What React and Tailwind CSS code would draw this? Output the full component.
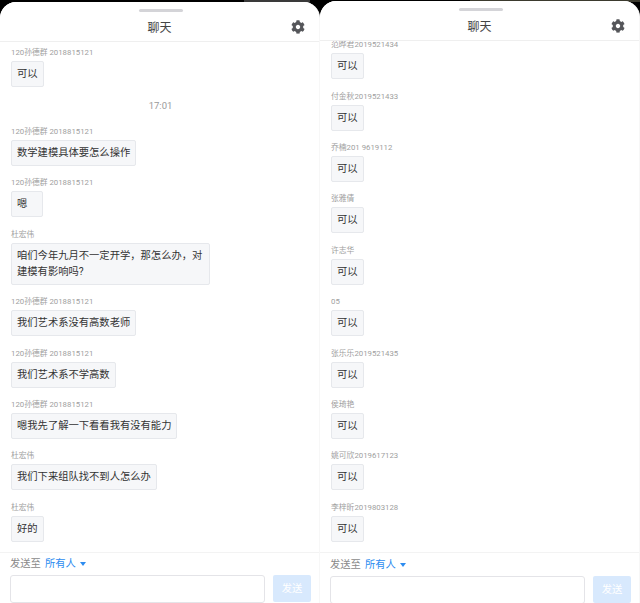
import React from "react";
import { FaCog } from "react-icons/fa";

const A = "120孙德群 2018815121";
const leftItems = [
  { n: A, t: "可以" },
  { time: "17:01" },
  { n: A, t: "数学建模具体要怎么操作" },
  { n: A, t: "嗯", w: "w-[32px]" },
  { n: "杜宏伟", t: "咱们今年九月不一定开学，那怎么办，对建模有影响吗?", w: "w-[199px]" },
  { n: A, t: "我们艺术系没有高数老师" },
  { n: A, t: "我们艺术系不学高数" },
  { n: A, t: "嗯我先了解一下看看我有没有能力" },
  { n: "杜宏伟", t: "我们下来组队找不到人怎么办" },
  { n: "杜宏伟", t: "好的" },
];
const rightItems = [
  "范晔君2019521434", "付金秋2019521433", "乔楠201 9619112", "张雅倩", "许志华", "05",
  "张乐乐2019521435", "侯琦艳", "姚可欣2019617123", "李梓昕2019803128",
].map((n) => ({ n, t: "可以" }));

function Message({ n, t, w }) {
  return (
    <div className="flex flex-col items-start">
      <div className="h-[14px] text-[7.8px] leading-[16px] text-[#a0a0a0] whitespace-nowrap">{n}</div>
      <div className={`mt-[2px] px-[5px] py-[4px] rounded-[2px] border border-[#e6e8ec] bg-[#f6f7f9] text-[10.3px] leading-[16px] text-[#333333] ${w || ""}`}>
        {t}
      </div>
    </div>
  );
}

function Panel({ items, topClass, listClass, footClass }) {
  return (
    <div className={`w-[320px] h-[603px] overflow-hidden flex flex-col bg-white rounded-t-[16px] border-r border-[#f7f7f7] ${topClass}`}>
      <div className="relative shrink-0 h-[40px] border-b border-[#efefef] flex items-center justify-center bg-white z-10">
        <div className="absolute left-[139px] top-[7px] w-[44px] h-[3px] rounded-full bg-[#d4d4d8]" />
        <span className="text-[12px] leading-[16px] text-[#444444] mt-[12px]">聊天</span>
        <FaCog className="absolute right-[14px] top-[18px] text-[#55565a]" size={14} />
      </div>
      <div className={`flex-1 min-h-0 overflow-hidden px-[11px] ${listClass}`}>
        <div className="flex flex-col gap-[9.4px]">
          {items.map((it, i) =>
            it.time ? (
              <div key={i} className="h-[18.2px] pt-[2px] flex items-center justify-center text-[9.5px] text-[#9a9a9a] mr-[-2px]">{it.time}</div>
            ) : (
              <Message key={i} {...it} />
            )
          )}
        </div>
      </div>
      <div className={`shrink-0 border-t border-[#f3f3f3] bg-white pl-[10px] pr-[8px] ${footClass}`}>
        <div className="h-[22px] flex items-center text-[10.3px] text-[#8a8a8a]">
          <span>发送至</span>
          <span className="ml-[4px] text-[#2d8cf0]">所有人</span>
          <span className="ml-[4px] w-0 h-0 border-x-[3.5px] border-x-transparent border-t-[4px] border-t-[#2d8cf0]" />
        </div>
        <div className="flex gap-[8px]">
          <div className="w-[255px] shrink-0 h-[28px] border border-[#e4e4e8] rounded-[3px] bg-white" />
          <div className="w-[38px] shrink-0 h-[27px] rounded-[2px] bg-[#d8e9fd] text-white text-[10.3px] flex items-center justify-center">发送</div>
        </div>
      </div>
    </div>
  );
}

export default function App() {
  return (
    <div className="relative w-[640px] h-[603px] overflow-hidden flex bg-black" style={{ fontFamily: '"Roboto","Noto Sans CJK SC",sans-serif' }}>
      <div className="absolute left-[244px] top-0 w-[66px] h-[3px] bg-[#3a3a3a]" />
      <div className="absolute left-[470px] top-0 w-[170px] h-[2px] bg-[#3b3a2e]" />
      <div className="relative flex">
        <Panel items={leftItems} topClass="mt-[2px]" listClass="pt-[3px]" footClass="h-[53px]" />
        <Panel items={rightItems} topClass="mt-[1px]" listClass="mt-[-3.8px]" footClass="h-[52px] pt-[1px]" />
      </div>
    </div>
  );
}
